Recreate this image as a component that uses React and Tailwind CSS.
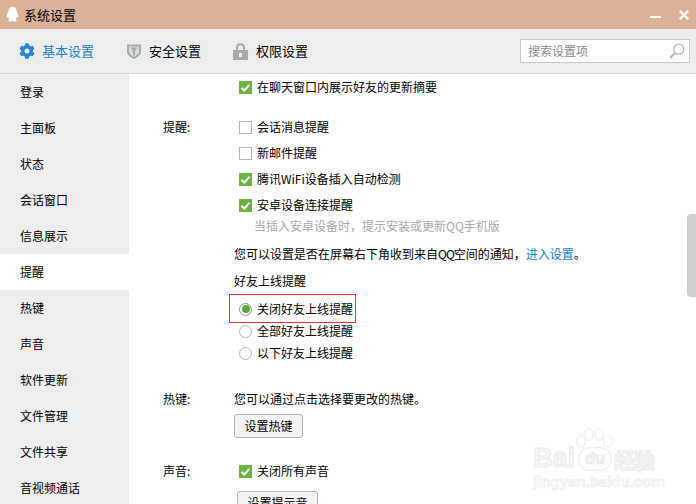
import React from 'react';
import { FaCog } from 'react-icons/fa';

const SIDEBAR = ['登录', '主面板', '状态', '会话窗口', '信息展示', '提醒', '热键', '声音', '软件更新', '文件管理', '文件共享', '音视频通话'];

function Check({ checked, label }) {
  return (
    <div className="flex items-center h-[18px] pl-[5px]">
      {checked ? (
        <svg width="13" height="13" viewBox="0 0 13 13" className="shrink-0">
          <rect width="13" height="13" fill="#6cb33f" />
          <path d="M2.5 6.8 L5.3 9.6 L10.6 3.6" fill="none" stroke="#fff" strokeWidth="2" />
        </svg>
      ) : (
        <span className="w-[13px] h-[13px] shrink-0 border border-[#b4b4b4] bg-white" />
      )}
      <span className="ml-[5px]">{label}</span>
    </div>
  );
}

function Radio({ checked, label }) {
  return (
    <div className="flex items-center h-[18px]">
      <span className={`w-[13px] h-[13px] shrink-0 rounded-full border flex items-center justify-center bg-white ${checked ? 'border-[#8e8e8e]' : 'border-[#b8b8b8]'}`}>
        {checked && <span className="w-[8px] h-[8px] rounded-full bg-[#5aa930]" />}
      </span>
      <span className="ml-[5px]">{label}</span>
    </div>
  );
}

function Tab({ icon, label, active, width }) {
  return (
    <div className={`flex items-center gap-[7px] ${width} ${active ? 'text-[#1f7fc4]' : 'text-black'}`}>
      {icon}
      <span>{label}</span>
    </div>
  );
}

export default function App() {
  return (
    <div className="relative w-[696px] h-[504px] overflow-hidden bg-white text-[12px] leading-[18px] text-black font-['Noto_Sans_CJK_SC','Noto_Sans',sans-serif]">
      {/* Title bar */}
      <div className="h-[29px] bg-[#dcb297] flex items-center pl-[6px] pr-[7px]">
        <svg width="13" height="17" viewBox="0 0 14 17">
          <path d="M7 0.5C3.9 0.5 2.6 3 2.6 5.6C1.4 7.4 0.4 9.6 0.9 11.6C1.4 12.3 2.2 11.3 2.5 10.8C2.8 12 3.3 12.9 4 13.6C2.9 14 2.3 14.6 2.6 15.3C3 16.2 5.6 16.2 7 15.2C8.4 16.2 11 16.2 11.4 15.3C11.7 14.6 11.1 14 10 13.6C10.7 12.9 11.2 12 11.5 10.8C11.8 11.3 12.6 12.3 13.1 11.6C13.6 9.6 12.6 7.4 11.4 5.6C11.4 3 10.1 0.5 7 0.5Z" fill="#fff" />
        </svg>
        <span className="ml-[5px] text-[13px]">系统设置</span>
        <div className="ml-auto flex items-center gap-[18px]">
          <span className="w-[11px] h-[2px] mt-[4px] bg-white" />
          <svg width="10" height="10" viewBox="0 0 10 10">
            <path d="M0.7 0.7 L9.3 9.3 M9.3 0.7 L0.7 9.3" stroke="#fff" strokeWidth="2" />
          </svg>
        </div>
      </div>

      {/* Tabs */}
      <div className="h-[45px] bg-[#eceeee] border-b border-[#d8dada] flex items-center pl-[19px] pr-[6px] text-[13px]">
        <Tab active width="w-[107px]" label="基本设置" icon={<FaCog size={16} className="text-[#2a86d6]" />} />
        <Tab width="w-[107px]" label="安全设置" icon={
          <svg width="16" height="17" viewBox="0 0 16 17">
            <path d="M1 1.5 H15 V9 C15 12 11 14.5 8 16 C5 14.5 1 12 1 9Z" fill="#a4abb0" />
            <path d="M3 3.5 H13 V8.8 C13 11 10 13 8 14 C6 13 3 11 3 8.8Z" fill="#d9dcdd" />
            <path d="M4.5 4.5 H11.5 L9 8 V12.5 H7 V8Z" fill="#a4abb0" />
          </svg>
        } />
        <Tab width="w-[100px]" label="权限设置" icon={
          <svg width="15" height="17" viewBox="0 0 15 17" className="mr-[1px]">
            <path d="M4 8 V4.6 C4 2.6 5.4 1.2 7.5 1.2 C9.6 1.2 11 2.6 11 4.6 V8" fill="none" stroke="#a4abb0" strokeWidth="2" />
            <rect y="7" width="15" height="10" fill="#a4abb0" />
            <rect x="6" y="10" width="3" height="4" fill="#eceeee" />
          </svg>
        } />
        <div className="ml-auto w-[170px] h-[24px] bg-white border border-[#c8c8c8] flex items-center pl-[7px] pr-[4px] text-[12px] text-[#8a8a8a]">
          <span>搜索设置项</span>
          <svg width="16" height="16" viewBox="0 0 16 16" className="ml-auto">
            <circle cx="9.8" cy="6.2" r="5" fill="none" stroke="#b4b4b4" strokeWidth="1.2" />
            <path d="M6.2 9.8 L1 15" stroke="#b4b4b4" strokeWidth="2" />
          </svg>
        </div>
      </div>

      <div className="flex h-[430px]">
        {/* Sidebar */}
        <div className="w-[129px] shrink-0 bg-[#eeeeee]">
          {SIDEBAR.map((item) => (
            <div key={item} className={`h-[36px] pl-[20px] flex items-center ${item === '提醒' ? 'bg-white' : ''}`}>
              {item}
            </div>
          ))}
        </div>

        {/* Settings content */}
        <div className="flex-1 pl-[34px] pt-[4px] overflow-hidden">
          <div className="pl-[71px]">
            <Check checked label="在聊天窗口内展示好友的更新摘要" />
          </div>

          <div className="flex mt-[22px]">
            <div className="w-[71px]">提醒:</div>
            <div className="flex-1">
              <div className="flex flex-col gap-[8px]">
                <Check label="会话消息提醒" />
                <Check label="新邮件提醒" />
                <Check checked label="腾讯WiFi设备插入自动检测" />
                <Check checked label="安卓设备连接提醒" />
              </div>
              <div className="pl-[20px] mt-[3px] text-[#a8a8a8]">当插入安卓设备时，提示安装或更新QQ手机版</div>
              <div className="mt-[10px]">
                您可以设置是否在屏幕右下角收到来自<span className="tracking-[-1px]">QQ</span>空间的通知，<span className="text-[#0f7fd0]">进入设置</span>。
              </div>
              <div className="mt-[9px]">好友上线提醒</div>
              <div className="flex flex-col mt-[2px] pl-[5px]">
                <div className="relative">
                  <div className="absolute left-[-10px] top-[2px] w-[127px] h-[29px] border border-[#e8323c]" />
                  <div className="pt-[8px]"><Radio checked label="关闭好友上线提醒" /></div>
                </div>
                <div className="mt-[4px]"><Radio label="全部好友上线提醒" /></div>
                <div className="mt-[4px]"><Radio label="以下好友上线提醒" /></div>
              </div>
            </div>
          </div>

          <div className="flex mt-[28px]">
            <div className="w-[71px]">热键:</div>
            <div>
              <div>您可以通过点击选择要更改的热键。</div>
              <button className="block mt-[6px] w-[69px] h-[24px] rounded-[3px] bg-[#f4f4f4] border border-[#b0b0b0] text-black">设置热键</button>
            </div>
          </div>

          <div className="flex mt-[24px]">
            <div className="w-[71px]">声音:</div>
            <div>
              <Check checked label="关闭所有声音" />
              <button className="block mt-[11px] ml-[3px] w-[81px] h-[24px] rounded-[3px] bg-[#f4f4f4] border border-[#b0b0b0] text-black">设置提示音</button>
            </div>
          </div>
        </div>
      </div>

      {/* Scrollbar thumb */}
      <div className="absolute left-[687px] top-[214px] w-[9px] h-[83px] rounded-l-[4px] bg-[#cdcdcd]" />

      {/* Watermark */}
      <div className="absolute left-[533px] top-[428px] w-[124px] h-[62px] text-[#f8f8f8] [-webkit-text-stroke:1px_#ebebeb]">
        <svg width="40" height="30" viewBox="0 0 40 30" className="absolute left-[42px] top-0">
          <g fill="#fff" stroke="#ebebeb" strokeWidth="1">
            <ellipse cx="6" cy="13" rx="4.5" ry="6" />
            <ellipse cx="14" cy="6.5" rx="4" ry="6" />
            <ellipse cx="24" cy="6.5" rx="4" ry="6" />
            <ellipse cx="33" cy="13" rx="4.5" ry="6" />
          </g>
        </svg>
        <div className="absolute left-0 top-[16px] text-[27px] leading-[28px] font-['Liberation_Sans',sans-serif] font-bold">Bai</div>
        <div className="absolute left-[45px] top-[19px] w-[34px] h-[24px] rounded-full bg-white border border-[#ebebeb] text-center text-[16px] leading-[21px] font-['Liberation_Sans',sans-serif] font-bold">du</div>
        <div className="absolute left-[81px] top-[19px] text-[21px] leading-[24px] font-bold whitespace-nowrap tracking-[-1px]">经验</div>
        <div className="absolute left-0 top-[45px] text-[15px] leading-[17px] font-['Liberation_Sans',sans-serif] font-bold whitespace-nowrap [-webkit-text-stroke:0.5px_#ebebeb]">jingyan.baidu.com</div>
      </div>
    </div>
  );
}
